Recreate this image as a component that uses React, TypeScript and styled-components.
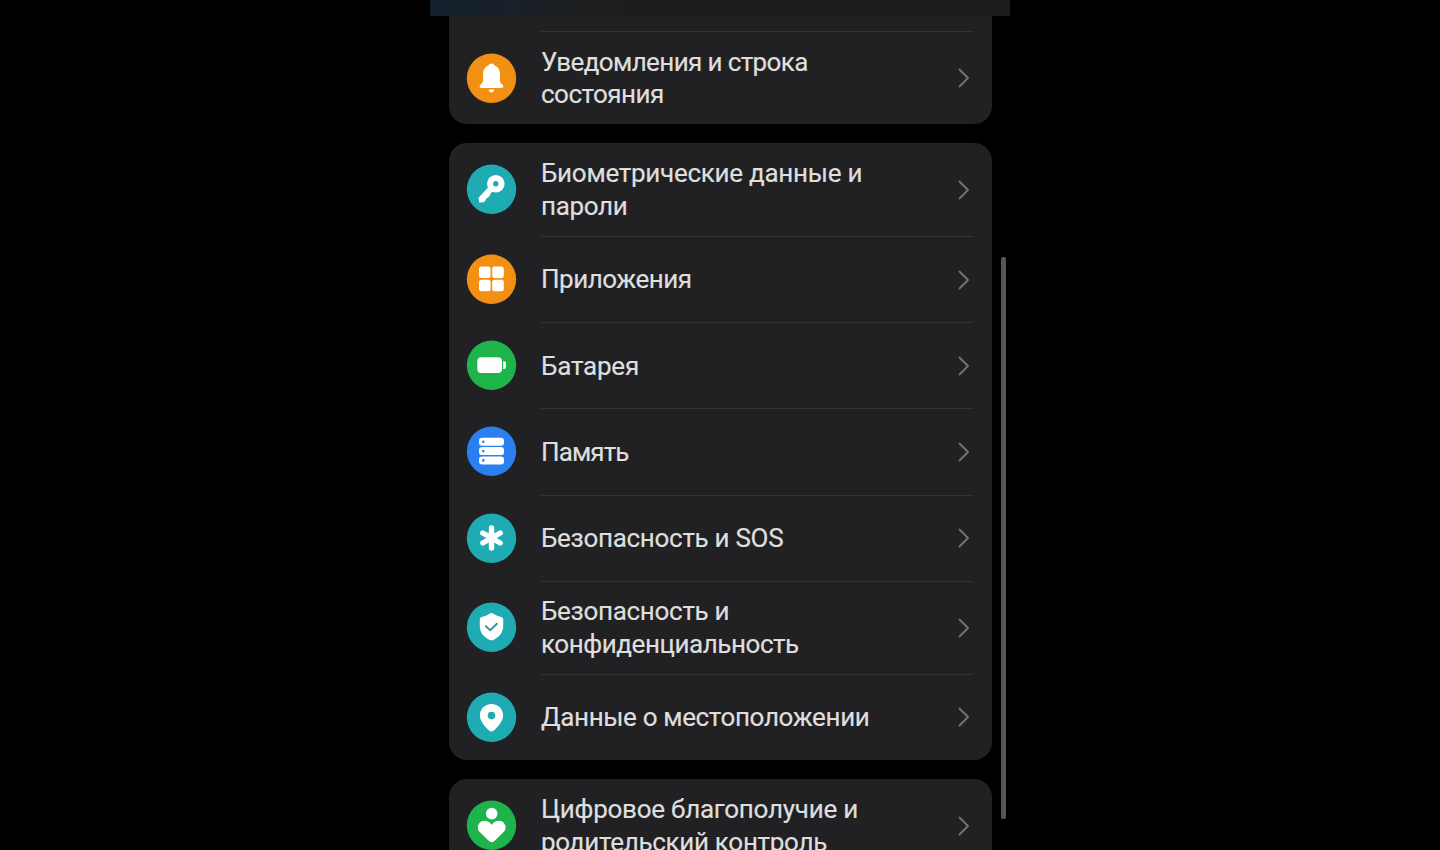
// Import packages
import React from 'react';
import styled, { createGlobalStyle } from 'styled-components';

interface Line {
  text: string
  tracking: number
}

interface Item {
  lines: Line[]
  color: string
  icon: React.ReactNode
}

const ORANGE = '#f29013';
const TEAL = '#1eabb1';
const GREEN = '#1fb34b';
const BLUE = '#2a80ee';

const GlobalStyle = createGlobalStyle`
  body {
    margin: 0;
    background-color: #000;
    overflow: hidden;
  }
`;

const StyledScreen = styled.main`
  position: relative;
  box-sizing: border-box;
  width: 580px;
  height: 850px;
  margin: 0 auto;
  overflow: hidden;
  background-color: #000;
  font-family: Roboto, 'Noto Sans', sans-serif;
`;

const StyledStatusBar = styled.header`
  height: 16px;
  background: linear-gradient(90deg, #14202c 0, #18212b 70px, #1c1f22 125px, #1d1d1e 200px, #1c1c1c 100%);
`;

const StyledList = styled.div`
  display: flex;
  flex-direction: column;
  gap: 18.8px;
  padding: 0 18.5px;
`;

const StyledCard = styled.section<{ $cut?: boolean }>`
  box-sizing: border-box;
  padding: ${({ $cut }) => ($cut ? '15px' : '0')} 18px 0;
  background-color: #212123;
  border-radius: ${({ $cut }) => ($cut ? '0 0 18px 18px' : '18px')};
`;

const StyledRow = styled.div<{ $tall: boolean }>`
  display: flex;
  align-items: center;
  height: ${({ $tall }) => ($tall ? '93.1px' : '86.2px')};
`;

const StyledIcon = styled.svg`
  flex: none;
  width: 50px;
  height: 50px;
  margin-right: 24.5px;
  overflow: visible;
`;

const StyledBody = styled.div<{ $divided: boolean }>`
  display: flex;
  flex: 1;
  align-items: center;
  justify-content: space-between;
  box-sizing: border-box;
  height: 100%;
  margin-right: 1px;
  border-top: 1px solid ${({ $divided }) => ($divided ? '#333335' : 'transparent')};
`;

const StyledLabel = styled.div`
  color: #dededf;
  font-size: 26px;
  line-height: 32.5px;
  white-space: nowrap;
  -webkit-text-stroke: 0.2px #dededf;
`;

const StyledLine = styled.span<{ $tracking: number }>`
  display: block;
  letter-spacing: ${({ $tracking }) => $tracking}px;
`;

const StyledChevron = styled.svg`
  flex: none;
  width: 14px;
  height: 22px;
  margin-right: 1.5px;
`;

const StyledScrollbar = styled.div`
  position: absolute;
  top: 257px;
  right: 4.500px;
  width: 4.500px;
  height: 562px;
  background-color: #565658;
  border-radius: 2px;
`;

const bell = (
  <>
    <path d='M25 10.300c1.700 0 2.600 1 3 2 3.200 1.200 5.400 4.200 5.400 8v6.500c0 2 .8 3.300 2.400 4.500 1.800 1.500 1.200 3.300-.6 3.300H14.800c-1.800 0-2.400-1.800-.6-3.300 1.600-1.200 2.400-2.500 2.400-4.500v-6.500c0-3.800 2.200-6.800 5.400-8 .4-1 1.300-2 3-2z' />
    <path d='M22.200 36.200h5.600c-.3 1.800-1.300 2.900-2.800 2.900s-2.500-1.100-2.800-2.900z' />
  </>
);

const key = (
  <>
    <circle cx='29.300' cy='19.400' r='8.800' />
    <path d='M24 25 15.200 34.600' stroke='#fff' strokeWidth='6' strokeLinecap='round' />
    <path d='M14.500 31.500 12.500 36.200c-.5 1.300.2 2.200 1.500 2.100l3.200-.3 2.300-2.300-.2-1.900 2-.2 3-3.500z' />
    <circle cx='29.300' cy='19.400' r='2.700' fill={TEAL} />
  </>
);

const apps = (
  <>
    <rect x='12.500' y='12.200' width='11.600' height='11.600' rx='2.500' />
    <rect x='25.700' y='12.200' width='11.600' height='11.600' rx='2.500' />
    <rect x='12.500' y='25.400' width='11.600' height='11.600' rx='2.500' />
    <rect x='25.700' y='25.400' width='11.600' height='11.600' rx='2.500' />
  </>
);

const battery = (
  <>
    <rect x='10.800' y='16.900' width='24.700' height='15.800' rx='4' />
    <path d='M36.600 20.900h.8c1.300 0 2 .9 2 2v3.800c0 1.100-.7 2-2 2h-.8z' />
  </>
);

const storage = (
  <>
    <rect x='12.500' y='11.500' width='25' height='8' rx='3.200' />
    <rect x='12.500' y='20.800' width='25' height='8' rx='3.200' />
    <rect x='12.500' y='30.100' width='25' height='8' rx='3.200' />
    <g fill={BLUE}>
      <circle cx='16.800' cy='15.500' r='1.300' />
      <circle cx='16.800' cy='24.800' r='1.300' />
      <circle cx='16.800' cy='34.100' r='1.300' />
    </g>
  </>
);

const sos = (
  <path
    d='M25 14.700v20M16.300 19.700l17.400 10M33.700 19.700l-17.400 10'
    stroke='#fff'
    strokeWidth='5.400'
    strokeLinecap='round'
  />
);

const shield = (
  <>
    <path d='M25 10.800c.7 0 1.300.3 2 .7 2.300 1.500 4.700 2.500 7.500 3.100 1.400.3 2.200 1.200 2.200 2.600v6.500c0 6.700-4.200 11.200-10.100 14.100-1.100.5-2.100.5-3.200 0-5.900-2.900-10.100-7.400-10.100-14.100v-6.500c0-1.400.8-2.300 2.200-2.600 2.800-.6 5.200-1.600 7.500-3.100.7-.4 1.300-.7 2-.7z' />
    <path d='m18.900 23.500 4.800 4.500 7.200-7' fill='none' stroke='#31969a' strokeWidth='1.900' />
  </>
);

const pin = (
  <>
    <path d='M25 11.700c6.500 0 11.600 5 11.600 11.400 0 5.400-4.500 11-9.600 15.300-1.300 1.100-2.700 1.100-4 0-5.100-4.300-9.600-9.900-9.600-15.300 0-6.400 5.100-11.400 11.600-11.400z' />
    <circle cx='25' cy='23.300' r='3.800' fill={TEAL} />
  </>
);

const wellbeing = (
  <>
    <circle cx='25.200' cy='13.300' r='5.800' />
    <path d='M25.200 24.700c2.800-4.800 9.200-5.500 12.200-2 2.500 2.900 2.100 6.700-.5 9.300l-8.700 8.500c-1.900 1.800-4.100 1.800-6 0L13.500 32c-2.600-2.600-3-6.400-.5-9.300 3-3.500 9.400-2.800 12.200 2z' />
  </>
);

const notifications: Item[] = [
  {
    lines: [
      { text: 'Уведомления и строка', tracking: -0.62 },
      { text: 'состояния', tracking: -0.5 },
    ],
    color: ORANGE,
    icon: bell,
  },
];

const system: Item[] = [
  {
    lines: [
      { text: 'Биометрические данные и', tracking: -0.27 },
      { text: 'пароли', tracking: -0.35 },
    ],
    color: TEAL,
    icon: key,
  },
  { lines: [{ text: 'Приложения', tracking: -0.5 }], color: ORANGE, icon: apps },
  { lines: [{ text: 'Батарея', tracking: -0.2 }], color: GREEN, icon: battery },
  { lines: [{ text: 'Память', tracking: -0.9 }], color: BLUE, icon: storage },
  { lines: [{ text: 'Безопасность и SOS', tracking: -0.3 }], color: TEAL, icon: sos },
  {
    lines: [
      { text: 'Безопасность и', tracking: -0.3 },
      { text: 'конфиденциальность', tracking: -0.44 },
    ],
    color: TEAL,
    icon: shield,
  },
  { lines: [{ text: 'Данные о местоположении', tracking: -0.35 }], color: TEAL, icon: pin },
];

const digital: Item[] = [
  {
    lines: [
      { text: 'Цифровое благополучие и', tracking: -0.25 },
      { text: 'родительский контроль', tracking: -0.3 },
    ],
    color: GREEN,
    icon: wellbeing,
  },
];

const SettingsCard: React.FC<{ items: Item[], cut?: boolean }> = ({ items, cut }) => {
  return (
    <StyledCard $cut={cut}>
      {items.map(({ lines, color, icon }, index) => (
        <StyledRow key={lines[0].text} $tall={lines.length > 1}>
          <StyledIcon viewBox='0.5 -0.3 50 50' fill='#fff'>
            <circle cx='25' cy='25' r='24.700' fill={color} />
            {icon}
          </StyledIcon>
          <StyledBody $divided={cut || index > 0}>
            <StyledLabel>
              {lines.map(({ text, tracking }) => (
                <StyledLine key={text} $tracking={tracking}>{text}</StyledLine>
              ))}
            </StyledLabel>
            <StyledChevron viewBox='0 0 14 22' fill='none' stroke='#717173' strokeWidth='2'>
              <path d='m2.500 2.500 8.500 8.500-8.500 8.500' strokeLinecap='round' strokeLinejoin='round' />
            </StyledChevron>
          </StyledBody>
        </StyledRow>
      ))}
    </StyledCard>
  );
};

const App: React.FC = () => {
  return (
    <>
      <GlobalStyle />
      <StyledScreen>
        <StyledStatusBar />
        <StyledList>
          <SettingsCard items={notifications} cut />
          <SettingsCard items={system} />
          <SettingsCard items={digital} />
        </StyledList>
        <StyledScrollbar />
      </StyledScreen>
    </>
  );
};

export default App;
